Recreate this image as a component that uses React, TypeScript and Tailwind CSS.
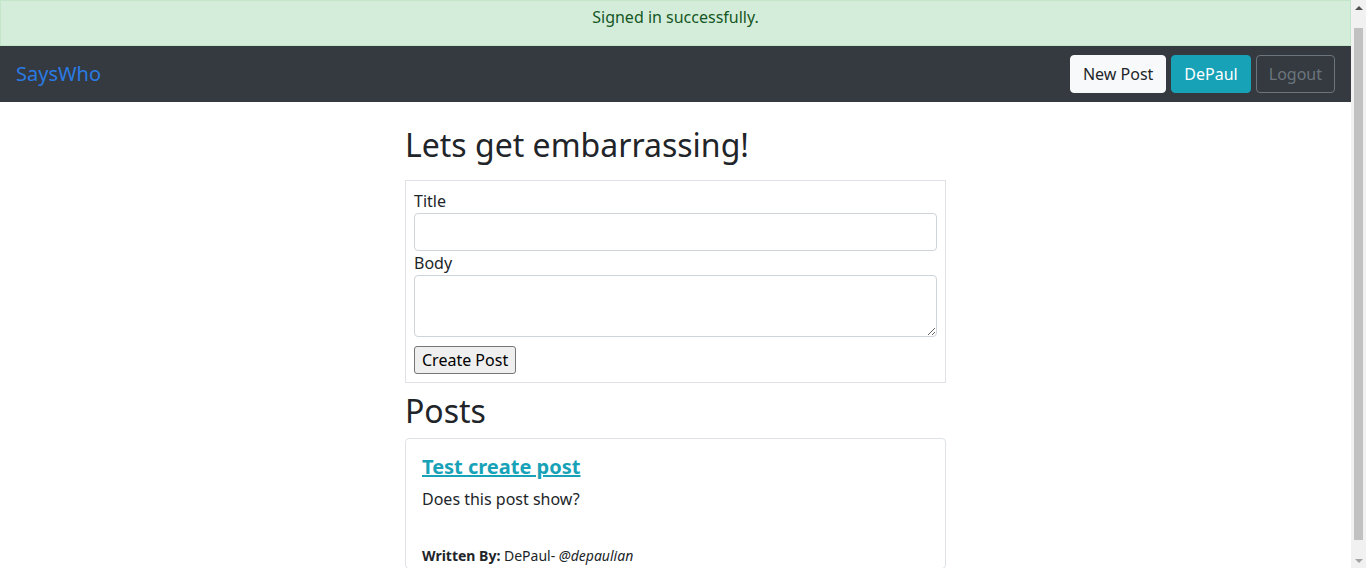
import React from "react";

const font = { fontFamily: '"Noto Sans", "Open Sans", sans-serif' };

function Flash() {
  return (
    <div className="h-[46px] border border-[#c3e6cb] bg-[#d4edda] pt-[4px] text-center text-base leading-6 text-[#155724]">
      Signed in successfully.
    </div>
  );
}

function Navbar() {
  return (
    <nav className="flex h-[56px] items-center justify-between bg-[#343a40] pr-4 pl-4">
      <a href="#" className="text-xl text-[#2a7ae4]">
        SaysWho
      </a>
      <div className="flex items-center gap-[5px]">
        <button
          type="button"
          className="h-[38px] rounded border border-[#f8f9fa] bg-[#f8f9fa] px-3 text-base text-[#212529]"
        >
          New Post
        </button>
        <button
          type="button"
          className="h-[38px] rounded border border-[#17a2b8] bg-[#17a2b8] px-3 text-base text-white"
        >
          DePaul
        </button>
        <button
          type="button"
          className="h-[38px] rounded border border-[#6c757d] bg-transparent px-3 text-base text-[#6c757d]"
        >
          Logout
        </button>
      </div>
    </nav>
  );
}

function NewPostForm() {
  return (
    <form className="border border-[#dee2e6] p-2">
      <label className="block text-base leading-6 text-[#212529]">Title</label>
      <input
        type="text"
        className="block h-[38px] w-full rounded border border-[#ced4da] bg-white px-3"
      />
      <label className="block text-base leading-6 text-[#212529]">Body</label>
      <textarea className="block h-[62px] w-full rounded border border-[#ced4da] bg-white px-3" />
      <div className="mt-[9px]">
        <button
          type="button"
          className="h-[28px] rounded-[3px] border border-[#767676] bg-[#efefef] px-[7px] text-base text-black"
        >
          Create Post
        </button>
      </div>
    </form>
  );
}

function PostCard() {
  return (
    <div className="rounded border border-[#dee2e6] px-4 pt-4">
      <a
        href="#"
        className="block text-xl leading-6 font-bold text-[#17a2b8] underline"
      >
        Test create post
      </a>
      <p className="mt-2 text-base leading-6 text-[#212529]">Does this post show?</p>
      <p className="mt-[33px] text-sm leading-6 text-[#212529]">
        <strong className="font-bold">Written By:</strong> DePaul-{" "}
        <em className="italic">@depaulian</em>
      </p>
    </div>
  );
}

// fake classic scrollbar, the reference was shot with one
function Scrollbar() {
  return (
    <div className="flex h-screen w-[15px] shrink-0 flex-col items-center bg-[#f1f1f1]">
      <div className="flex h-[15px] w-full items-center justify-center">
        <div className="h-0 w-0 border-x-[4px] border-b-[4px] border-x-transparent border-b-[#505050]" />
      </div>
      <div className="my-[13px] w-[9px] flex-1 bg-[#c1c1c1]" />
      <div className="flex h-[15px] w-full items-center justify-center">
        <div className="h-0 w-0 border-x-[4px] border-t-[4px] border-x-transparent border-t-[#a3a3a3]" />
      </div>
    </div>
  );
}

export default function App() {
  return (
    <div style={font} className="flex h-screen overflow-hidden bg-white text-[#212529]">
      <div className="min-w-0 flex-1">
        <Flash />
        <Navbar />
        <main className="mx-auto w-[541px]">
          <h2 className="mt-[24px] mb-[16px] text-[32px] leading-[38px] font-normal">
            Lets get embarrassing!
          </h2>
          <NewPostForm />
          <h2 className="mt-[9px] mb-[8px] text-[32px] leading-[38px] font-normal">
            Posts
          </h2>
          <PostCard />
        </main>
      </div>
      <Scrollbar />
    </div>
  );
}
